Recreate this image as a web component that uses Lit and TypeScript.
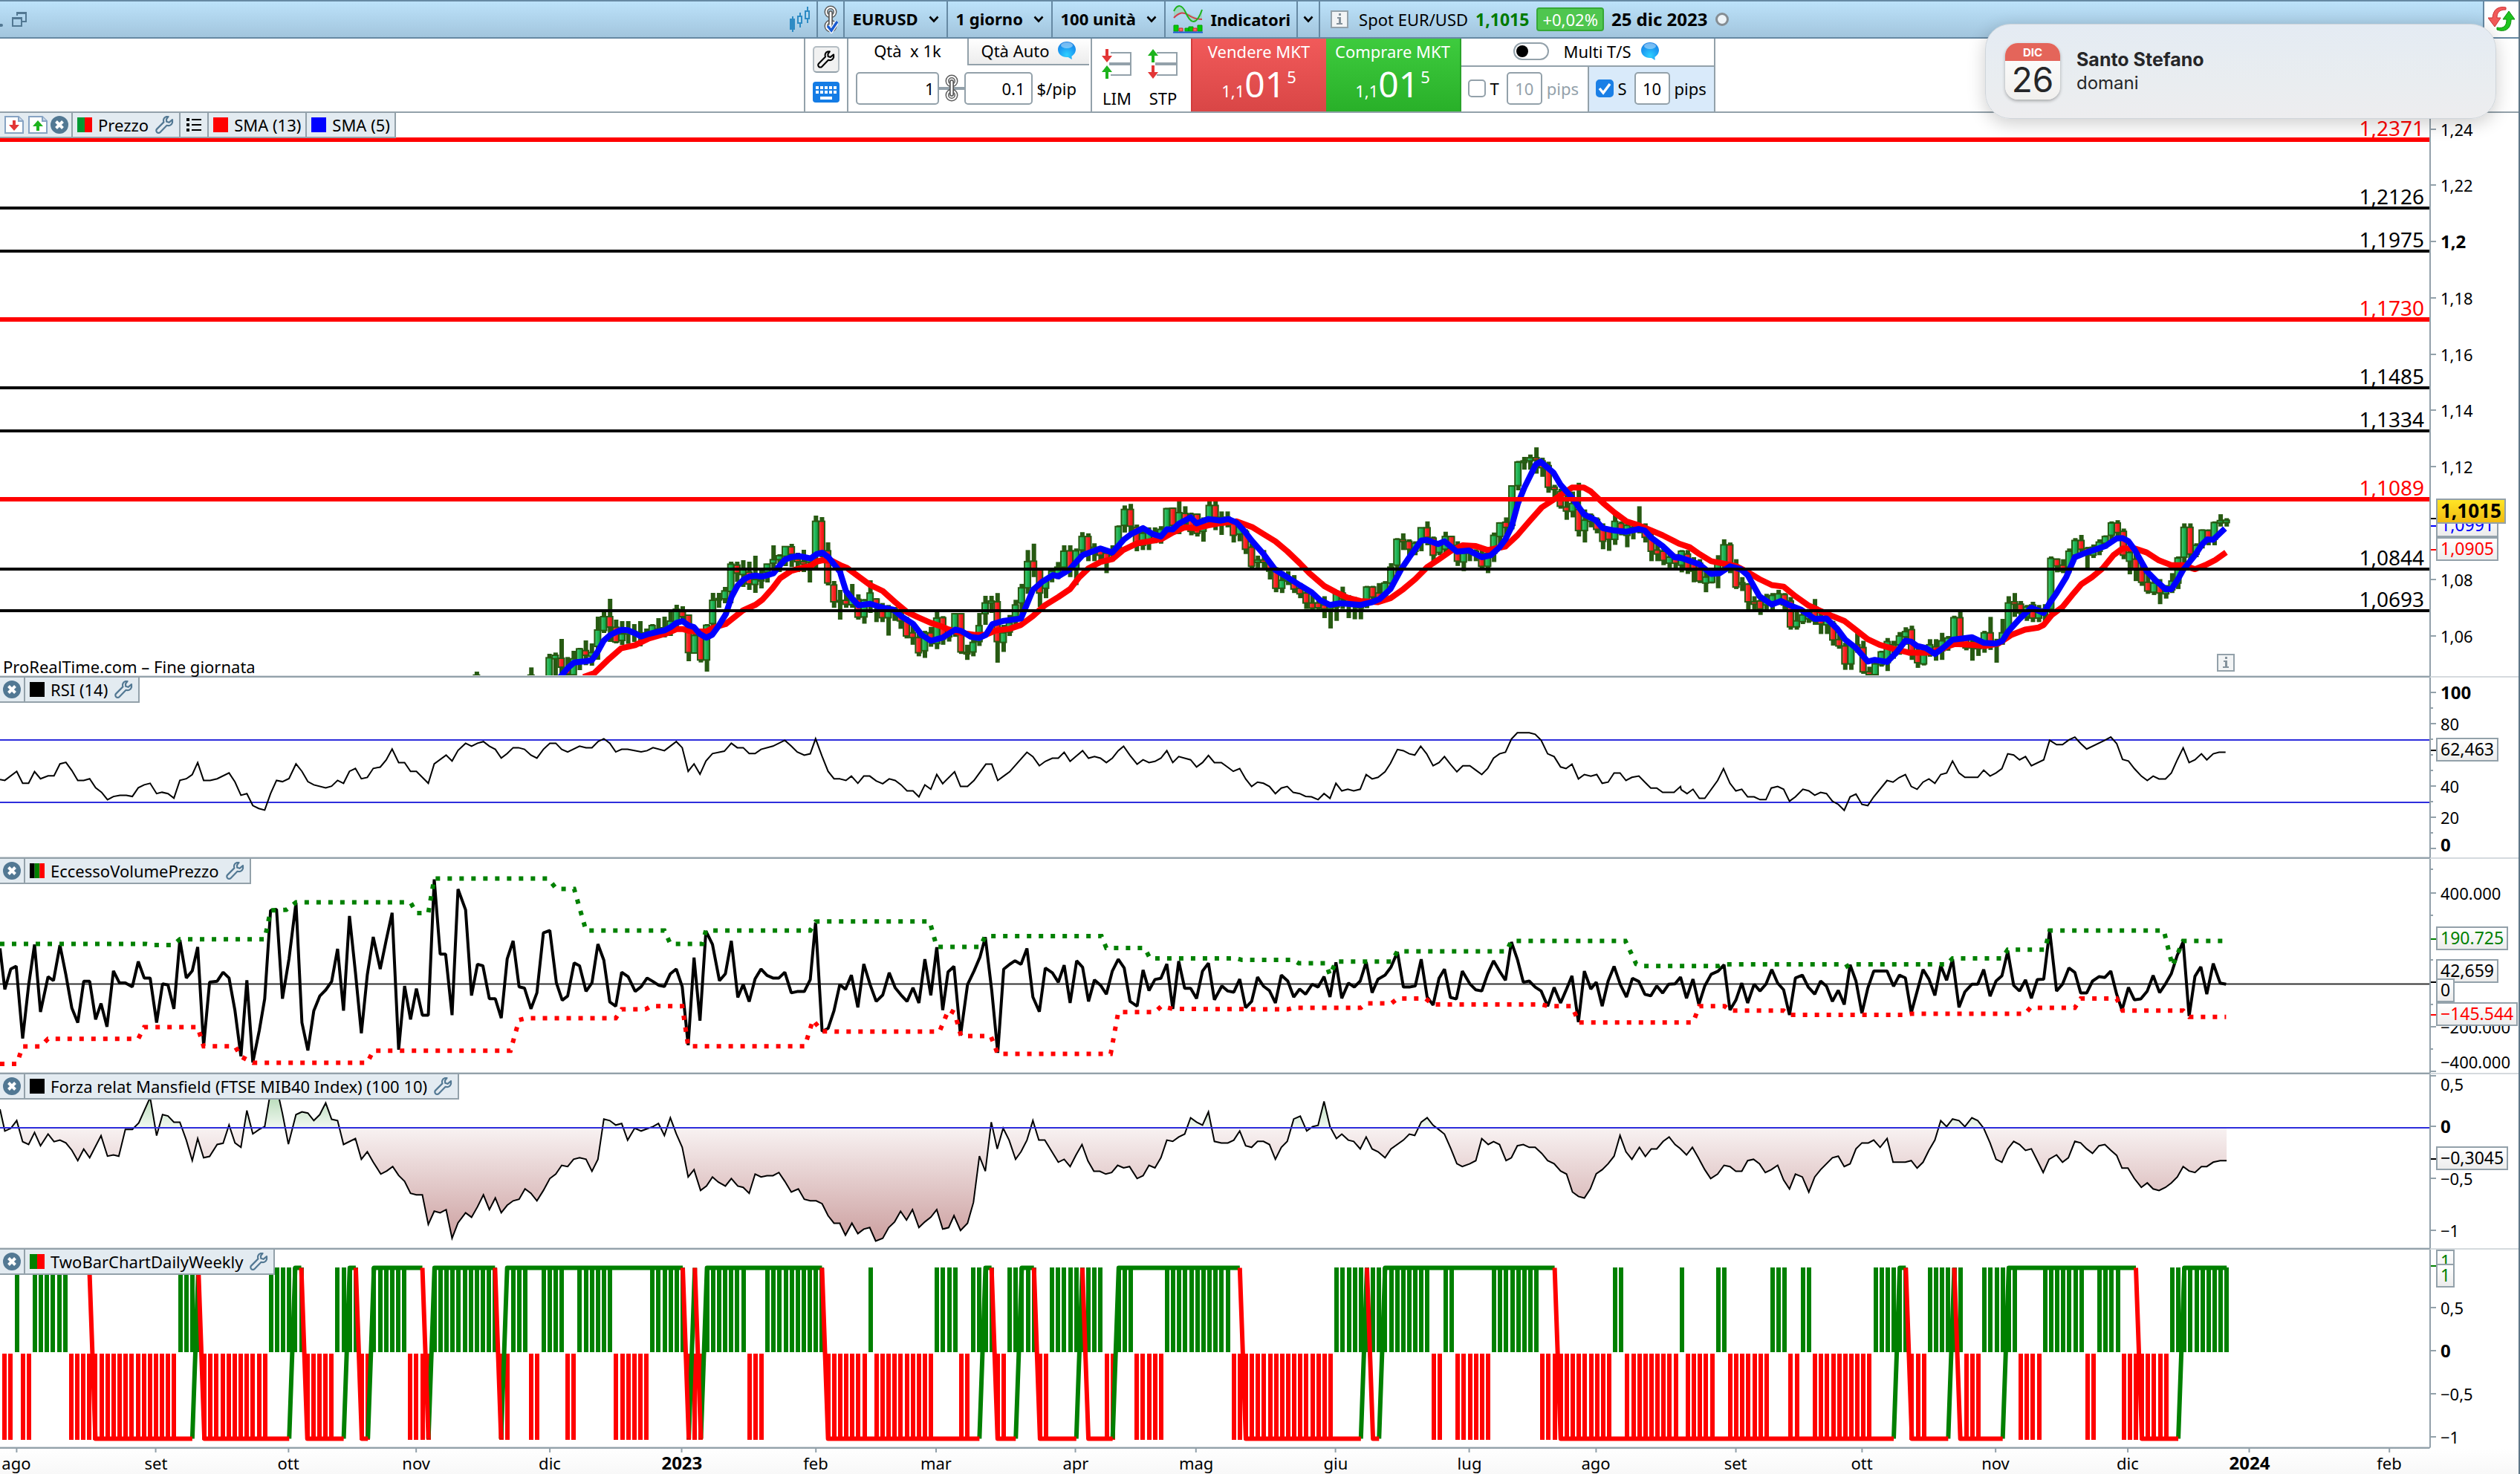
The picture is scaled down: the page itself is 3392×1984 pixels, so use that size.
import { LitElement, html, css, svg, nothing } from "lit";
import { customElement } from "lit/decorators.js";

type Pt = [number, number];
/** A digitised window of the chart: origin and units per chart pixel. */
interface Frame { x: number; y: number; sx: number; sy: number }

const SX = 1568 / 1140;
const SXR = 1568 / 1132;
const SY = 1568 / 840;
const SYL = 1568 / 548;
const EARLY: Frame = { x: 640, y: 670, sx: 3, sy: 3 };
const LEFT: Frame = { x: 0, y: 880, sx: SX, sy: 2.8 };
const MID: Frame = { x: 1130, y: 600, sx: SX, sy: SY };
const RIGHT: Frame = { x: 2260, y: 600, sx: SXR, sy: SY };
const LOW_LEFT: Frame = { x: 0, y: 1436, sx: SX, sy: SYL };
const LOW_MID: Frame = { x: 1130, y: 1436, sx: SX, sy: SYL };
const LOW_RIGHT: Frame = { x: 2260, y: 1436, sx: SXR, sy: SYL };

const trace = (...parts: [Frame, string][]): Pt[] =>
  parts.flatMap(([f, s]) =>
    s.trim().split(/\s+/).map((p): Pt => {
      const [x, y] = p.split(",").map(Number);
      return [f.x + x / f.sx, f.y + y / f.sy];
    })
  );
const join = (pts: Pt[]) => pts.map(([x, y]) => `${x.toFixed(1)},${y.toFixed(1)}`).join(" ");

/* Bars are one trading day apart, starting on 1 August 2022. */
const BAR_STEP = 8.15;
const BAR_ZERO = 22.5;
const barX = (i: number) => BAR_ZERO + BAR_STEP * i;
const barAt = (f: Frame, x: number) => Math.round((f.x + x / f.sx - BAR_ZERO) / BAR_STEP);

const SMA13 = trace(
  [EARLY, "436,724 480,708 540,650 588,608 645,595 700,568 770,548 812,530 836,530 860,537 890,540 932,540 960,525 1010,510 1080,455 1131,432 1160,410 1200,365 1230,325 1275,295 1329,280 1353,275 1377,258 1401,252 1440,255 1480,275"],
  [MID, "14,307 35,328 57,350 80,365 103,393 125,418 147,432 169,445 191,455 204,463 225,470 249,475 270,475 290,464 315,460 336,450 358,428 381,400 405,380 427,360 444,330 461,308 483,292 505,285 525,262 551,245 573,240 595,235 617,218 639,205 661,207 683,200 707,194 735,190 765,205 785,222 807,240 829,265 852,295 870,320 897,352 919,368 941,382 964,390 997,393 1020,383 1044,360 1066,335 1088,305 1110,285 1131,265 1154,250 1178,252 1200,262 1233,253 1255,225 1277,190 1300,155 1334,125 1356,105 1378,105 1391,115 1413,143 1435,168 1457,190 1480,200 1502,212 1524,225 1546,240"],
  [RIGHT, "0,246 20,255 38,272 60,290 84,296 106,302 125,315 150,335 173,350 195,354 217,378 240,400 264,415 286,428 308,440 330,463 352,486 374,500 399,510 430,520 460,520 477,518 499,505 515,498 546,500 570,503 595,497 620,475 645,462 670,457 680,450 695,425 715,405 733,375 750,348 770,330 790,308 810,275 827,258 850,258 872,268 895,288 918,300 940,300 962,310 984,298 1000,287 1020,268"]
);

const SMA5 = trace(
  [EARLY, "342,724 375,685 399,665 423,662 447,660 471,655 494,620 518,577 543,555 566,543 590,533 615,535 640,545 669,560 700,550 741,540 765,535 789,522 812,505 836,498 860,515 882,522 906,550 932,565 956,553 980,520 1011,470 1034,400 1058,355 1083,330 1106,318 1131,314 1155,318 1179,313 1203,305 1227,275 1250,250 1275,240 1305,235 1329,240 1353,245 1377,228 1401,222 1425,240 1449,270 1473,300"],
  [MID, "2,322 12,365 24,385 35,401 57,397 80,407 100,412 114,428 136,447 152,475 169,490 191,482 214,462 225,465 243,480 258,483 271,475 283,448 304,440 325,436 336,434 345,405 358,362 375,342 395,325 405,328 425,312 450,275 483,258 505,268 527,235 540,222 562,207 580,222 595,228 606,210 617,210 628,196 650,180 661,195 683,184 705,188 720,184 735,193 750,215 763,238 785,272 807,312 829,330 852,350 874,368 890,388 908,400 925,396 941,397 964,400 986,393 1000,385 1020,360 1040,310 1055,280 1077,238 1088,237 1108,247 1120,240 1143,266 1165,263 1189,280 1206,275 1222,255 1233,235 1244,205 1256,145 1268,105 1289,47 1298,40 1322,68 1335,98 1356,130 1378,172 1400,187 1413,207 1435,213 1457,216 1480,209 1491,213 1502,230 1524,252 1546,280 1557,282"],
  [RIGHT, "0,280 22,290 38,298 60,322 76,320 95,303 115,310 128,325 150,378 173,399 190,390 205,400 228,412 253,435 275,434 295,460 310,487 330,508 352,542 365,538 388,543 405,520 422,490 433,492 444,503 460,508 477,523 495,505 510,487 530,484 546,481 568,495 591,497 603,490 613,468 635,435 657,407 680,420 691,395 704,370 722,330 738,280 760,268 795,252 816,233 827,232 838,240 849,260 872,315 890,340 907,360 918,360 929,338 940,312 962,275 975,248 985,235 996,236 1018,208"]
);

/* x, high, body top, body bottom, low, direction */
const CANDLES: [Frame, string][] = [
  [EARLY, `8,702,716,720,726,g 225,685,716,720,726,g 303,630,646,726,730,g 327,625,636,650,726,g 351,570,648,684,726,r 375,643,690,712,726,r
399,618,650,715,726,g 423,606,610,655,696,g 447,576,617,636,676,r 471,588,625,640,678,g 494,480,534,600,654,g 518,462,480,536,546,g
543,408,480,522,582,r 566,492,523,582,588,r 590,498,550,576,594,g 615,498,540,550,590,g 645,510,540,550,582,r 669,498,550,560,600,r
693,528,545,560,580,g 714,510,516,545,560,g 741,486,530,545,560,g 765,480,525,540,564,g 789,462,498,530,558,g 812,432,450,500,520,g
836,438,460,480,500,r 860,472,474,625,660,r 882,520,556,627,630,g 906,550,556,655,665,r 932,510,515,655,702,g 956,384,414,508,520,g
987,384,407,413,444,g 1011,360,376,408,426,g 1034,258,268,378,426,g 1058,258,272,304,340,r 1083,252,290,310,360,g 1106,258,300,348,372,r
1131,234,330,350,384,g 1155,290,330,335,366,g 1179,266,268,300,342,g 1203,192,250,264,290,g 1227,228,234,250,300,g 1250,196,197,236,276,g
1275,186,198,228,280,r 1305,222,248,258,300,r 1329,210,258,268,300,r 1353,240,250,260,342,g 1377,72,95,230,285,g 1401,78,95,215,240,r
1425,180,214,344,354,r 1449,336,352,420,444,r 1473,372,415,421,492,g 1496,384,414,430,444,r 1520,348,405,432,444,g 1545,390,410,482,492,r`],
  [MID, `46,385,388,430,447,g 57,338,370,400,420,g 68,383,385,400,443,r 80,395,405,432,443,r 92,400,405,432,477,g 103,405,408,418,440,r
114,410,420,440,460,r 125,430,440,478,484,r 136,450,470,482,500,r 147,470,482,520,529,r 158,465,470,515,533,g 169,455,470,485,505,r
180,418,433,497,511,g 191,428,432,485,500,r 202,455,465,480,492,g 213,420,422,462,480,g 224,420,422,518,523,r 238,500,519,523,538,r
249,480,494,518,529,g 260,420,452,492,503,g 271,377,395,422,450,g 282,377,390,395,420,g 293,370,392,492,545,r 304,450,470,494,518,g
315,425,445,468,478,g 325,387,400,430,455,g 336,347,357,395,425,g 347,262,291,357,372,g 358,246,290,312,330,r 370,308,312,370,405,r
381,335,340,358,383,g 392,310,315,330,343,g 403,292,305,325,335,g 416,250,265,305,325,g 427,250,264,310,330,r 439,258,264,310,350,g
450,217,228,262,280,g 461,220,228,270,290,r 472,245,255,265,290,g 483,252,258,275,295,r 494,262,270,290,320,r 505,250,262,275,290,g
515,200,203,260,270,g 527,150,160,200,218,g 538,146,160,202,218,r 551,198,205,250,265,r 562,205,220,250,262,g 573,205,215,235,262,g
584,205,215,235,245,r 595,202,210,235,246,g 606,156,158,215,225,g 617,155,157,200,215,r 628,138,168,205,222,g 639,152,170,190,205,r
650,168,172,215,225,r 661,170,172,220,228,r 672,180,190,215,241,g 683,138,150,185,200,g 694,138,150,180,212,r 707,165,180,190,224,g
718,165,180,195,205,r 729,185,195,225,243,r 741,195,200,222,240,g 752,210,215,260,272,r 763,245,255,303,308,r 774,276,287,293,306,g
785,262,287,293,306,r 796,290,295,315,336,r 807,305,315,358,368,r 818,315,338,358,370,g 829,315,330,340,350,g 840,325,345,360,370,r
852,345,358,372,383,r 863,360,370,395,410,r 874,375,395,408,412,r 885,380,395,407,412,r 897,378,400,410,433,r 908,395,400,410,459,g
919,365,370,405,440,g 930,354,370,385,410,r 941,375,385,400,433,g 952,380,388,402,436,r 964,390,395,408,436,r 975,352,355,390,408,g
986,352,355,380,390,r 997,345,370,382,395,r 1008,340,345,375,380,g 1020,295,305,345,360,g 1033,232,235,300,330,g 1044,220,236,241,262,r
1055,235,240,260,280,r 1066,240,245,265,275,g 1077,205,206,240,265,g 1088,190,206,230,250,r 1099,228,232,275,290,r 1110,240,250,268,275,g
1120,216,228,260,275,g 1131,226,228,250,262,r 1143,240,250,290,302,r 1154,265,270,292,315,g 1167,255,262,270,290,g 1178,260,265,275,290,r
1189,262,275,303,308,r 1200,262,270,303,320,g 1211,218,225,270,292,g 1222,192,194,228,262,g 1233,180,192,205,240,r 1244,100,101,200,210,g
1255,38,41,100,112,g 1266,28,38,42,60,g 1277,22,30,38,60,g 1289,4,30,36,70,r 1300,30,38,55,78,r 1311,40,50,104,118,r
1322,98,104,110,140,r 1334,108,115,152,158,r 1345,120,154,164,186,r 1356,115,145,165,180,g 1369,93,160,213,228,r 1380,160,187,213,243,g
1391,170,175,190,205,g 1402,180,185,210,220,r 1413,195,205,240,260,r 1424,205,215,235,264,r 1434,170,190,235,249,g 1446,190,195,210,225,r
1457,190,200,225,255,g 1468,195,205,215,235,g 1480,152,205,211,220,g 1491,195,208,230,243,r 1502,220,232,265,290,r 1513,240,262,272,290,r
1524,255,265,288,300,r 1535,270,280,295,306,g 1546,272,275,295,308,r 1557,268,275,295,308,g`],
  [RIGHT, `4,262,265,300,318,g 14,262,272,310,322,r 27,280,290,315,343,r 38,285,295,340,345,r 49,310,330,345,368,g 60,310,320,343,346,g
73,275,290,320,358,g 84,235,249,300,310,g 95,243,249,305,320,r 106,285,305,355,360,r 118,330,344,348,365,g 128,345,348,392,415,r
140,378,392,398,415,r 151,375,390,410,425,r 162,372,380,400,415,g 173,370,376,400,415,g 184,362,372,395,400,g 195,370,374,400,415,r
206,380,390,455,462,r 217,418,440,455,462,g 228,420,425,442,448,g 240,410,420,435,445,g 253,385,405,440,450,r 264,410,430,448,473,r
275,425,435,450,473,g 286,440,447,488,502,r 297,470,487,503,510,r 308,495,503,548,563,r 319,495,500,548,563,g 330,470,500,510,520,r
341,490,507,568,573,r 352,555,568,575,578,r 363,540,548,575,578,g 374,515,518,550,555,g 388,483,492,545,566,g 399,490,500,510,535,g
410,468,478,500,525,g 422,456,467,480,500,g 433,452,462,525,538,r 444,505,520,545,558,r 455,520,525,548,552,g 466,486,500,520,530,g
477,486,505,515,540,r 488,470,490,515,538,g 499,478,483,500,515,g 510,427,432,485,500,g 522,417,432,485,500,r 533,480,485,508,514,r
546,478,502,508,540,r 557,490,495,510,528,g 568,465,470,500,520,g 580,430,470,500,513,r 591,485,492,500,545,r 602,435,470,490,500,g
613,378,395,470,480,g 625,370,392,398,430,r 635,390,398,420,432,r 647,400,405,430,440,g 658,392,400,433,443,r 669,400,415,433,443,g
680,398,410,425,440,g 691,278,283,410,420,g 704,283,285,302,318,r 715,285,300,315,320,r 726,258,265,305,320,g 738,232,238,275,285,g
749,224,238,260,275,r 760,254,258,270,308,r 771,248,255,275,282,g 783,235,242,265,275,g 794,225,228,245,258,g 805,190,194,225,245,g
816,187,194,218,230,r 827,208,215,275,285,r 838,255,268,290,323,g 849,270,285,312,340,r 861,295,312,343,352,r 872,320,343,365,372,r
883,335,345,368,375,g 895,335,350,370,398,r 907,350,366,372,384,g 918,320,340,362,370,g 929,278,282,345,360,g 940,195,205,280,300,g
951,195,205,272,290,r 962,245,250,272,280,g 973,210,212,245,258,g 984,210,213,240,250,r 996,190,193,235,250,g 1010,172,188,194,203,g
1020,182,187,193,203,g`],
];

const RSI = trace(
  [LEFT, "0,474 9,477 31,443 42,488 53,488 64,444 75,471 89,460 100,460 111,415 122,409 133,440 144,477 155,477 166,471 177,505 188,522 199,550 210,538 222,533 234,533 245,538 256,505 267,494 278,488 290,527 300,522 311,527 322,544 333,477 345,471 356,455 366,410 377,477 389,477 402,471 424,449 435,483 446,533 457,527 468,572 479,583 490,589 501,527 512,477 523,482 535,470 548,415 559,443 570,482 581,494 603,505 614,499 625,477 636,488 647,443 658,432 669,471 680,466 691,432 704,427 715,400 726,359 738,410 749,410 760,443 771,443 793,488 804,415 826,382 837,404 848,364 862,337 873,348 884,337 895,331 906,348 917,360 928,393 939,376 950,354 960,354 971,360 983,382 994,393 1006,360 1018,337 1029,337 1040,360 1051,370 1073,348 1085,354 1096,354 1107,331 1118,320 1129,337 1140,370 1151,360 1162,360 1187,370 1198,365 1209,354 1230,365 1252,331 1263,354 1274,443 1285,415 1296,454 1307,404 1319,376 1341,367 1354,337 1365,354 1376,354 1387,376 1398,376 1409,360 1431,348 1453,326 1465,348 1476,370 1489,382 1500,377 1510,320 1522,387 1533,443 1544,471 1555,471"],
  [MID, "1,837 12,841 22,830 34,848 45,830 56,830 68,842 80,849 92,837 103,841 114,852 125,867 136,867 147,882 158,852 169,863 180,826 191,849 213,819 224,856 237,856 249,841 271,800 282,800 293,841 304,830 315,819 347,770 358,781 370,804 381,793 394,785 405,785 416,770 427,793 450,766 461,785 472,781 483,785 494,796 505,785 516,766 526,755 538,778 551,800 562,789 573,796 584,793 595,785 606,766 617,796 628,781 650,789 661,807 672,796 683,778 694,796 707,796 718,807 729,818 741,811 752,837 763,856 774,845 785,848 796,856 807,874 818,860 829,856 840,871 852,874 863,881 874,882 886,889 897,874 908,886 919,848 930,867 941,863 952,867 964,863 975,826 986,837 997,833 1010,819 1020,798 1033,763 1044,766 1055,774 1065,777 1076,755 1087,774 1099,804 1110,796 1120,781 1131,800 1143,819 1154,804 1167,804 1178,815 1189,826 1200,811 1211,785 1222,774 1233,770 1244,737 1255,721 1277,721 1288,725 1299,740 1311,774 1323,781 1335,807 1345,811 1356,800 1368,837 1379,826 1391,830 1402,826 1412,848 1423,845 1434,822 1445,822 1456,841 1467,833 1480,830 1491,845 1502,860 1513,860 1524,871 1545,871 1557,856"],
  [RIGHT, "4,864 15,874 26,863 38,886 48,886 72,841 83,811 95,848 106,867 117,863 128,882 140,882 151,889 162,889 172,860 184,856 195,863 206,893 217,882 231,863 242,867 253,878 264,871 275,874 286,893 297,901 308,916 319,882 330,875 341,901 352,904 363,882 388,841 399,845 410,834 422,826 433,856 444,863 455,845 466,837 477,848 488,826 499,822 510,792 522,822 533,833 557,833 568,815 580,830 591,822 602,811 613,774 624,777 635,789 646,781 657,804 680,789 691,740 704,751 715,751 727,739 738,732 749,748 760,762 794,740 805,732 816,748 827,788 838,792 849,811 862,830 873,841 884,830 895,837 907,837 918,822 929,789 940,759 951,796 962,789 974,774 984,789 996,774 1007,770 1019,770"]
);

const EXCESS = trace(
  [LEFT, "0,1110 9,1265 20,1188 30,1177 42,1450 53,1250 64,1096 75,1350 89,1217 99,1232 111,1098 122,1210 133,1335 144,1390 155,1234 166,1234 177,1378 187,1318 198,1406 210,1195 221,1240 232,1240 245,1255 256,1160 267,1222 278,1222 290,1390 301,1244 311,1248 322,1338 333,1078 345,1222 356,1195 366,1105 377,1478 388,1238 402,1234 413,1200 424,1222 435,1345 446,1517 457,1230 468,1540 480,1420 490,1300 501,967 512,963 523,1300 535,1150 548,938 559,1390 570,1495 581,1345 592,1290 603,1267 614,1235 625,1112 636,1345 647,988 658,1200 669,1430 680,1210 691,1067 704,1188 715,1080 726,976 738,1492 749,1252 760,1378 771,1262 782,1362 793,1362 804,850 815,1132 825,1132 837,1362 848,887 862,965 873,1288 884,1170 894,1176 906,1300 917,1300 928,1373 939,1150 950,1082 961,1255 971,1260 983,1338 994,1278 1006,1052 1018,1043 1030,1240 1041,1306 1051,1290 1063,1165 1073,1176 1085,1272 1096,1240 1107,1094 1118,1155 1129,1312 1140,1328 1151,1200 1163,1217 1176,1272 1187,1255 1198,1222 1209,1235 1220,1250 1230,1254 1241,1206 1252,1188 1263,1255 1274,1475 1285,1145 1296,1383 1307,1045 1319,1095 1332,1232 1343,1206 1354,1082 1366,1295 1376,1246 1387,1311 1398,1225 1409,1188 1420,1212 1431,1222 1442,1222 1453,1200 1465,1278 1476,1273 1489,1273 1500,1228 1510,1013 1522,1423 1533,1412 1544,1345 1555,1245"],
  [MID, "1,1354 11,1366 22,1330 34,1411 45,1302 57,1355 68,1396 80,1380 92,1324 103,1362 114,1380 125,1396 136,1362 147,1400 158,1290 169,1381 180,1260 191,1418 201,1322 212,1308 224,1482 237,1354 249,1320 260,1285 270,1235 282,1370 293,1525 304,1315 315,1303 325,1294 336,1303 347,1263 358,1385 370,1422 381,1312 394,1324 405,1348 416,1305 427,1400 439,1294 450,1310 461,1396 472,1342 483,1355 494,1378 505,1320 516,1290 527,1312 538,1396 551,1408 562,1317 573,1369 584,1341 595,1338 606,1302 617,1415 628,1295 639,1363 650,1363 661,1389 672,1320 683,1300 694,1392 708,1357 719,1370 730,1373 741,1340 752,1412 763,1396 774,1335 785,1358 796,1369 807,1400 818,1330 830,1345 841,1385 852,1365 863,1378 875,1353 886,1360 897,1334 908,1385 919,1298 930,1388 942,1350 953,1360 964,1345 975,1297 986,1374 997,1340 1010,1330 1021,1310 1033,1272 1044,1360 1055,1360 1066,1357 1077,1290 1088,1385 1099,1405 1110,1338 1120,1315 1131,1386 1142,1390 1153,1320 1167,1352 1178,1367 1189,1370 1200,1327 1211,1294 1222,1320 1233,1343 1244,1247 1255,1290 1266,1348 1277,1345 1288,1360 1299,1370 1311,1408 1323,1361 1335,1400 1345,1368 1356,1332 1368,1448 1379,1320 1391,1365 1401,1348 1412,1408 1423,1345 1434,1308 1446,1355 1457,1385 1468,1338 1480,1346 1491,1378 1502,1382 1513,1357 1524,1375 1535,1353 1547,1352 1557,1335"],
  [RIGHT, "3,1336 14,1388 26,1340 37,1404 48,1357 60,1328 73,1320 84,1304 95,1418 106,1393 117,1350 128,1400 140,1353 151,1370 162,1353 173,1316 184,1350 195,1367 206,1430 217,1337 230,1330 241,1360 253,1378 264,1345 275,1358 286,1396 297,1368 308,1404 319,1304 330,1345 341,1426 352,1363 363,1320 388,1320 400,1358 411,1330 422,1337 433,1425 455,1316 466,1340 477,1381 488,1306 499,1343 510,1290 522,1411 533,1372 546,1353 557,1353 568,1316 580,1383 591,1345 602,1332 613,1270 624,1356 635,1370 646,1342 657,1388 668,1341 680,1340 691,1218 704,1370 715,1353 727,1312 738,1323 749,1375 760,1375 771,1345 783,1334 794,1336 805,1320 816,1378 826,1418 838,1361 849,1392 861,1390 873,1370 884,1331 896,1374 907,1352 918,1326 929,1280 940,1246 951,1433 962,1333 973,1309 984,1378 996,1301 1009,1350 1020,1353"]
);

const UPPER_BAND = trace(
  [LEFT, "0,1093 270,1093 285,1098 320,1098 333,1076 490,1076 501,967 530,965 548,937 760,937 771,977 793,977 804,847 1015,847 1030,886 1063,886 1085,1043 1230,1043 1241,1093 1300,1093 1307,1043 1500,1043 1510,1009"],
  [MID, "0,1195 167,1195 180,1259 260,1259 270,1232 485,1232 494,1262 565,1262 575,1288 735,1288 745,1292 840,1292 850,1300 900,1300 908,1330 919,1296 1022,1296 1033,1270 1235,1270 1244,1244 1455,1244 1475,1302 1485,1307"],
  [RIGHT, "0,1307 75,1307 84,1303 300,1303 310,1310 319,1303 499,1303 510,1288 602,1288 613,1266 682,1266 691,1218 904,1218 920,1307 940,1244 1020,1244"]
);
const LOWER_BAND = trace(
  [LEFT, "0,1546 31,1546 42,1480 75,1480 89,1451 256,1451 267,1407 366,1407 377,1479 435,1479 446,1518 468,1541 680,1541 691,1496 945,1496 961,1380 975,1373 1140,1373 1151,1340 1195,1340 1205,1328 1263,1328 1274,1479 1490,1479 1505,1380 1522,1423"],
  [MID, "0,1472 185,1472 202,1417 213,1425 225,1483 280,1483 293,1528 502,1528 516,1423 584,1423 596,1408 617,1415 830,1416 840,1412 965,1412 975,1401 1022,1401 1033,1389 1085,1389 1099,1404 1300,1404 1312,1408 1356,1408 1369,1449"],
  [RIGHT, "0,1449 26,1449 38,1408 85,1408 95,1419 195,1419 206,1430 420,1430 433,1427 645,1427 655,1412 738,1412 749,1389 816,1389 827,1419 940,1419 951,1435 1020,1435"]
);

const MANSFIELD = trace(
  [LOW_LEFT, "0,163 9,247 20,237 31,207 42,288 53,299 64,253 75,304 89,259 100,288 111,282 122,293 133,321 144,361 155,317 166,350 187,265 199,344 210,339 220,344 232,241 245,241 257,216 278,118 290,265 301,184 311,189 322,213 333,213 345,282 356,361 366,276 377,350 388,345 402,299 413,294 424,224 435,293 446,310 457,168 468,258 480,241 490,230 501,95 514,95 523,180 534,298 548,184 559,173 570,178 581,207 592,184 603,139 614,202 625,207 636,299 658,276 669,356 680,327 691,367 705,413 716,401 727,384 738,418 749,441 760,487 771,493 782,493 793,607 804,556 815,562 826,550 837,660 848,601 862,562 873,579 884,539 895,493 906,550 917,505 928,562 939,533 950,516 961,510 972,470 983,487 994,516 1006,476 1018,430 1029,413 1040,379 1051,384 1062,356 1073,350 1085,356 1096,402 1107,356 1118,201 1129,207 1140,224 1151,218 1162,282 1175,236 1187,247 1209,230 1219,218 1230,264 1241,196 1252,258 1263,310 1274,424 1285,396 1297,476 1308,459 1319,424 1330,444 1343,459 1354,430 1366,459 1376,464 1387,487 1398,413 1409,424 1420,419 1431,419 1442,407 1453,441 1465,482 1478,470 1489,510 1500,516 1511,516 1522,527 1533,573 1544,602 1555,602"],
  [LOW_MID, "1,605 11,648 23,602 34,642 45,625 56,619 67,671 80,660 91,619 102,597 113,556 124,590 135,550 147,619 158,597 169,579 180,550 191,625 202,619 212,573 224,630 237,602 248,522 259,344 270,402 281,213 292,316 303,236 314,282 326,356 336,327 347,282 358,207 369,282 380,282 405,367 416,356 427,384 438,339 449,299 460,362 471,402 482,402 493,413 504,407 515,379 526,389 537,384 551,430 562,419 573,379 584,389 595,350 606,282 617,287 628,270 639,259 650,196 661,213 672,224 683,173 694,287 707,293 719,293 730,282 741,247 752,304 763,310 774,287 785,287 796,299 807,356 818,310 829,287 841,201 853,190 865,247 876,230 886,225 897,133 908,230 920,276 930,259 942,282 952,287 964,316 975,270 986,316 997,327 1010,350 1021,316 1044,282 1055,259 1065,264 1077,213 1088,196 1099,225 1110,242 1120,259 1132,316 1143,373 1153,384 1167,373 1178,361 1189,276 1201,299 1211,288 1222,299 1234,361 1244,350 1255,304 1266,299 1277,310 1288,310 1300,333 1311,361 1323,373 1335,401 1346,413 1357,482 1368,499 1379,505 1390,470 1401,412 1412,396 1423,373 1434,344 1445,264 1456,327 1467,356 1481,310 1492,345 1503,316 1513,316 1525,287 1536,270 1547,299"],
  [LOW_RIGHT, "2,314 14,339 25,310 36,350 48,396 59,430 72,413 84,379 95,384 106,402 117,402 128,361 139,356 150,373 161,407 172,396 184,379 195,436 206,470 217,413 230,424 242,482 253,424 264,396 286,350 297,344 308,384 319,373 330,316 341,293 353,293 363,282 375,310 388,276 399,367 422,367 433,361 444,390 455,367 466,321 477,282 488,207 499,230 510,201 522,207 533,230 546,196 557,207 568,236 580,293 591,356 602,367 613,316 624,287 635,299 646,322 657,316 668,361 679,407 690,356 704,339 715,367 726,350 738,287 749,293 760,316 771,333 783,304 794,299 805,321 816,341 826,390 837,390 849,430 862,464 873,447 884,470 895,476 907,464 918,447 929,424 940,384 951,401 962,407 974,384 984,384 996,367 1009,361 1021,361"]
);

/* Runs of bars whose daily signal is up; every other bar is down. */
const DAILY_UP: [Frame, string][] = [
  [LOW_LEFT, "32-32 64-122 333-366 501-559 625-658 691-749 804-917 950-972 1006-1040 1073-1129 1209-1263 1307-1376 1421-1522"],
  [LOW_MID, "56-56 180-213 248-281 315-358 394-482 515-537 606-719 920-1088 1121-1132 1211-1289 1434-1445 1558-1558"],
  [LOW_RIGHT, "73-84 172-195 230-242 363-422 466-522 568-624 680-749 783-816 918-1020"],
];
/* Runs of bars whose weekly signal is up. */
const WEEKLY_UP: [Frame, string][] = [
  [LOW_LEFT, "0-166 366-366 548-559 647-658 691-782 804-917 939-1263 1285-1285 1307-1522"],
  [LOW_MID, "270-281 336-358 449-449 515-740 975-975 1010-1323"],
  [LOW_RIGHT, "411-422 510-510 613-848 940-1020"],
];
const runs = (parts: [Frame, string][]): Pt[] =>
  parts.flatMap(([f, s]) => s.split(" ").map((r): Pt => {
    const [a, b] = r.split("-").map(Number);
    return [barAt(f, a), barAt(f, b)];
  }));
const FIRST_BAR = -2;
const LAST_BAR = 365;

type Tick = [number, string, ("b" | "m")?, number?];
interface Badge { y: number; text: string; kind?: string; tick?: number }
interface Panel {
  id: string; y: number; h: number; ticks: Tick[]; minor: number[]; badges: Badge[];
}

const PRICE: Panel = {
  id: "price", y: 152, h: 758, minor: [],
  ticks: [[174, "1,24"], [249, "1,22"], [325, "1,2", "b"], [401, "1,18"], [477, "1,16"], [552, "1,14"], [628, "1,12"], [780, "1,08"], [856, "1,06"]],
  badges: [{ y: 707, text: "1,0991", kind: "blue", tick: 708 }, { y: 739, text: "1,0905", kind: "red", tick: 740 }, { y: 688, text: "1,1015", kind: "last", tick: 698 }],
};
const RSI_PANEL: Panel = {
  id: "rsi", y: 912, h: 242, minor: [953, 995, 1016, 1037, 1079, 1121],
  ticks: [[932, "100", "b"], [974, "80"], [1058, "40"], [1100, "20"], [1142, "0", "b", 1137]],
  badges: [{ y: 1009, text: "62,463", tick: 1010 }],
};
const EXCESS_PANEL: Panel = {
  id: "excess", y: 1156, h: 288, minor: [1170, 1232, 1292, 1352, 1412],
  ticks: [[1202, "400.000"], [1382, "−200.000"], [1442, "−400.000", undefined, 1429]],
  badges: [{ y: 1263, text: "190.725", kind: "green", tick: 1264 }, { y: 1307, text: "42,659", tick: 1322 }, { y: 1333, text: "0" }, { y: 1365, text: "−145.544", kind: "red", tick: 1366 }],
};
const MANS_PANEL: Panel = {
  id: "mansfield", y: 1446, h: 234, minor: [],
  ticks: [[1448, "0,5", undefined, 1459], [1516, "0", "b"], [1586, "−0,5"], [1656, "−1"]],
  badges: [{ y: 1559, text: "−0,3045", tick: 1560 }],
};
const TWO_PANEL: Panel = {
  id: "twobar", y: 1682, h: 266, minor: [],
  ticks: [[1760, "0,5"], [1818, "0", "b"], [1876, "−0,5"], [1934, "−1"]],
  badges: [{ y: 1698, text: "1", kind: "green" }, { y: 1717, text: "1", kind: "green", tick: 1704 }],
};

const LEVELS: [number, string, boolean][] = [
  [188, "1,2371", true], [280, "1,2126", false], [338, "1,1975", false], [430, "1,1730", true], [522, "1,1485", false],
  [580, "1,1334", false], [672, "1,1089", true], [766, "1,0844", false], [822, "1,0693", false],
];

const MONTHS: [number, string, boolean?][] = [
  [22, "ago"], [210, "set"], [388, "ott"], [560, "nov"], [740, "dic"], [918, "2023", true], [1098, "feb"], [1260, "mar"], [1448, "apr"],
  [1610, "mag"], [1798, "giu"], [1978, "lug"], [2148, "ago"], [2336, "set"], [2506, "ott"], [2686, "nov"], [2864, "dic"], [3028, "2024", true], [3216, "feb"],
];
const PLOT_W = 3270;

const chevron = html`<svg class="chev" viewBox="0 0 14 10" aria-hidden="true"><path d="M1.5 1.5 7 7.5l5.5-6" fill="none" stroke="#000" stroke-width="2.6" /></svg>`;
const wrenchPath = "M15.5 3.2C12.5 4.2 11.2 7.6 12.4 10.4L3.2 19.6C2 20.8 2 22.8 3.2 24S6.400 25.200 7.600 24L16.600 14.800C19.600 16 23 14.400 24 11V7.200L19.500 10.800 16.200 9.800 16 6.400 18.500 3Z";
const wrench = (cls: string, color: string) => html`<svg class=${cls} viewBox="0 0 27 28" aria-hidden="true"><path d=${wrenchPath} fill="none" stroke=${color} stroke-width="2.200" stroke-linejoin="round" /></svg>`;
const closeIcon = html`<svg class="round" viewBox="0 0 24 24" aria-hidden="true"><circle cx="12" cy="12" r="12" fill="#527893" /><path d="m7.500 7.500 9 9m0-9-9 9" stroke="#fff" stroke-width="4" /></svg>`;
const balloon = html`<svg class="balloon" viewBox="0 0 26 26" aria-hidden="true"><defs><radialGradient id="bl" cx=".5" cy=".75" r=".8"><stop offset="0" stop-color="#2fd0ff" /><stop offset=".6" stop-color="#1b9af2" /><stop offset="1" stop-color="#1c7fe0" /></radialGradient></defs><path d="M13 1c6.600 0 12 4.700 12 10.600 0 4-2.400 7.300-5.600 9.200l.4 4.200-5-3C6.800 22.800 1 18 1 11.600 1 5.700 6.400 1 13 1Z" fill="url(#bl)" /><ellipse cx="13" cy="6" rx="8" ry="4" fill="#fff" opacity=".4" /></svg>`;
const info = html`<svg class="info" viewBox="0 0 24 24" role="img" aria-label="Informazioni"><rect x="1" y="1" width="22" height="22" fill="#f2f4f5" stroke="#93a1aa" stroke-width="2" /><path d="M9 9h5v8h2v2H8v-2h3v-6H9zM11 4h3v3h-3z" fill="#84929c" /></svg>`;
const chain = (check: boolean) => html`<svg class="chain" viewBox="0 0 20 38" aria-hidden="true">
  <g fill="none"><rect x="4" y="3" width="12" height="12" rx="6" stroke="#5c5c5c" stroke-width="5" /><rect x="4" y="3" width="12" height="12" rx="6" stroke="#fff" stroke-width="2" />
  <rect x="4" y="22" width="12" height="12" rx="6" stroke="#5c5c5c" stroke-width="5" /><rect x="4" y="22" width="12" height="12" rx="6" stroke="#fff" stroke-width="2" />
  <path d="M10 10v17" stroke="#5c5c5c" stroke-width="6" stroke-linecap="round" /><path d="M10 10v17" stroke="#fff" stroke-width="2.500" stroke-linecap="round" />
  ${check ? svg`<path d="m6 28 5 6 8-12" stroke="#fff" stroke-width="6" /><path d="m6 28 5 6 8-12" stroke="#1a5bd0" stroke-width="3.500" />` : nothing}</g></svg>`;
const orderIcon = (topDown: boolean) => {
  const down = (y: number) => svg`<path d="M5 ${y}h4v9h5l-7 9-7-9h5z" fill="#e23636" />`;
  const up = (y: number) => svg`<path d="M5 ${y + 18}h4v-9h5l-7-9-7 9h5z" fill="#1db31d" />`;
  return html`<svg class="order" viewBox="0 0 42 40" aria-hidden="true">
    <path d="M12 5h27v30H12" fill="none" stroke="#93a1aa" stroke-width="2" /><path d="M10 20h29" stroke="#93a1aa" stroke-width="4" />
    ${topDown ? [down(0), up(22)] : [up(0), down(22)]}</svg>`;
};

@customElement("app-root")
export class AppRoot extends LitElement {
  static styles = css`
    :host { display: block; font: 22px/28px "Noto Sans", "Open Sans", sans-serif; color: #000; background: #fff; }
    * { box-sizing: border-box; }
    svg { display: block; flex: none; }
    button, input, select { font: inherit; color: inherit; margin: 0; }
    button { border: 0; background: none; padding: 0; }
    .app { position: relative; display: grid; grid-template-rows: 52px 100px minmax(0, 1fr); height: 100vh; border-right: 2px solid #5f7788; overflow: hidden; }

    .head { display: grid; grid-template-columns: minmax(0, 1fr) auto minmax(0, 1fr); border: solid #6689a3; border-width: 2px 0; background: linear-gradient(#bce2fa, #a2c5dd); }
    .head-left { display: flex; align-items: center; gap: 12px; }
    .dot { width: 4px; height: 4px; background: #527893; border-radius: 0 2px 2px 0; align-self: flex-end; margin-bottom: 14px; }
    .windows { width: 20px; height: 20px; }
    .head-mid { display: flex; align-items: stretch; }
    .candle-ico { width: 28px; height: 34px; align-self: center; margin-right: 8px; }
    .cell { display: flex; align-items: center; border-left: 2px solid #6689a3; font-weight: 700; }
    .link { width: 36px; justify-content: center; }
    .chain { width: 20px; height: 38px; }
    .pick { display: grid; align-items: center; }
    .pick select, .pick svg { grid-area: 1 / 1; }
    .pick select { appearance: none; border: 0; border-radius: 0; background: none; font-weight: 700; height: 100%; padding: 0 38px 2px 10px; }
    .chev { width: 14px; height: 10px; justify-self: end; margin-right: 10px; pointer-events: none; }
    .ind { gap: 10px; padding: 0 8px 0 10px; height: 100%; display: flex; align-items: center; font-weight: 700; }
    .ind-ico { width: 40px; height: 38px; }
    .more { width: 30px; display: grid; place-items: center; }
    .more .chev { justify-self: center; margin: 0; }
    .info { width: 24px; height: 24px; }
    .quote { gap: 10px; padding-left: 14px; font-weight: 400; white-space: nowrap; }
    .quote .info { margin-right: 4px; }
    .up { color: #007a00; font-weight: 700; font-size: 23px; }
    .chg { color: #fff; background: #4fc64f; border: 2px solid #36a836; border-radius: 4px; padding: 0 6px; }
    .date { font-weight: 700; font-size: 24px; }
    .ring { width: 18px; height: 18px; border: 3px solid #858d93; border-radius: 50%; background: #eef4f8; }
    .head-right { display: flex; justify-content: flex-end; }
    .refresh { width: 48px; background: #fff; border-left: 2px solid #6689a3; display: grid; place-items: center; }
    .refresh svg { width: 36px; height: 34px; }

    .trade { display: flex; justify-content: center; border-bottom: 2px solid #93a1aa; }
    .group { border-left: 2px solid #93a1aa; }
    .tools { width: 58px; display: flex; flex-direction: column; align-items: center; justify-content: space-between; padding: 10px 0 12px; }
    .wrench-btn { width: 36px; height: 36px; border: 2px solid #b4bdc3; border-bottom-color: #93a1aa; border-radius: 5px; background: #f1f1f1; display: grid; place-items: center; }
    .wrench-big { width: 26px; height: 28px; }
    .kbd { width: 36px; height: 28px; }
    .qty { width: 328px; display: grid; grid-template-rows: 36px 1fr; }
    .tabs { display: grid; grid-template-columns: 160px 164px; }
    .tabs button { display: flex; align-items: center; justify-content: center; gap: 10px; white-space: pre; padding-bottom: 4px; }
    .tabs .auto { border: solid #93a1aa; border-width: 0 0 2px 2px; padding-bottom: 2px; background: linear-gradient(#fff, #ececec); }
    .balloon { width: 26px; height: 26px; }
    .amounts { display: flex; align-items: center; padding: 0 0 0 10px; }
    .amounts input, .ts input[type="text"] { height: 44px; border: 2px solid #93a1aa; border-radius: 5px; background: #fff; text-align: right; padding: 0 4px; }
    .lots { width: 112px; }
    .pipv { width: 92px; padding-right: 8px !important; }
    .tie { width: 34px; display: grid; place-items: center; background: linear-gradient(#93a1aa, #93a1aa) center / 100% 4px no-repeat; }
    .amounts label { margin-left: 6px; }
    .orders { width: 135px; display: flex; gap: 20px; padding: 14px 0 0 13px; }
    .orders button { display: flex; flex-direction: column; align-items: center; gap: 12px; width: 42px; }
    .order { width: 42px; height: 40px; }
    .mkt { width: 182px; color: #fff; display: flex; flex-direction: column; align-items: center; justify-content: flex-start; gap: 6px; padding-top: 3px; }
    .sell { background: linear-gradient(#f15a5a, #d94646); border-left: 2px solid #d23c3c; }
    .buy { background: linear-gradient(#3ecb3e, #29b029); border-right: 2px solid #29a329; }
    .px { display: flex; align-items: baseline; line-height: 48px; }
    .px b { font-weight: 400; font-size: 48px; }
    .px i { font-style: normal; align-self: flex-start; line-height: 28px; margin-left: 2px; }
    .ts { width: 342px; border-right: 2px solid #93a1aa; display: grid; grid-template-rows: 38px 1fr; }
    .multi { display: flex; align-items: center; padding: 0 0 2px 70px; border-bottom: 2px solid #93a1aa; }
    .toggle { width: 48px; height: 24px; border: 2px solid #93a1aa; border-radius: 12px; background: #fff; padding: 2px; display: flex; }
    .toggle::before { content: ""; width: 16px; height: 16px; border-radius: 50%; background: #000; }
    .multi span { margin: 0 12px 0 20px; }
    .stops { display: grid; grid-template-columns: 1fr 1fr; padding-bottom: 0; }
    .stop { display: flex; align-items: center; gap: 6px; padding: 0 0 2px 9px; }
    .stop + .stop { background: #d9eafa; border-left: 2px solid #93a1aa; }
    .off { color: #93a1aa; }
    .ts input[type="checkbox"] { appearance: none; width: 24px; height: 24px; border: 2px solid #93a1aa; border-radius: 5px; background: #fff; flex: none; }
    .ts input[type="checkbox"]:checked { border-color: #1a7fe6; background: #1a7fe6; }
    .tick { position: relative; display: grid; }
    .tick svg { position: absolute; inset: 3px; width: 18px; height: 18px; pointer-events: none; }
    .ts input[type="text"] { width: 48px; text-align: center; padding: 0; margin-left: 4px; }

    .charts { display: grid; min-height: 0; grid-template-rows: minmax(0, 760fr) minmax(0, 244fr) minmax(0, 290fr) minmax(0, 236fr) minmax(0, 268fr) 34px; }
    .panel { display: grid; grid-template-columns: minmax(0, 1fr) 120px; min-height: 0; }
    .plot { position: relative; border-bottom: 2px solid #93a1aa; min-height: 0; min-width: 0; }
    .plot > svg { width: 100%; height: 100%; }
    .axis { position: relative; border-left: 2px solid #93a1aa; border-bottom: 2px solid #d5dade; overflow: hidden; min-height: 0; }
    .panel.twobar .axis { border-bottom-color: #fff; }
    .axis > svg { width: 100%; height: 100%; }
    .lab { position: absolute; left: 13px; transform: translateY(-50%); white-space: nowrap; line-height: 24px; }
    .lab.b { font-weight: 700; font-size: 24px; }
    .badge { position: absolute; left: 7px; height: 32px; font-size: 23px; line-height: 26px; transform: translateY(-50%); border: 2px solid #93a1aa; background: linear-gradient(#fff, #ececec); padding: 0 4px; white-space: nowrap; }
    .badge.blue { color: #00f; }
    .badge.red { color: #f00; }
    .badge.green { color: #008000; }
    .badge.last { height: 34px; line-height: 29px; font-size: 26px; font-weight: 700; background: linear-gradient(#ffe526, #f0ba12); }
    .level { position: absolute; right: 7px; font-size: 28px; line-height: 28px; margin-top: -30px; }
    .level.red { color: #f00; }
    .source { position: absolute; left: 4px; bottom: 0; line-height: 26px; }
    .plot-info { position: absolute; bottom: 6px; right: 262px; padding: 0; }

    .legend { position: absolute; left: 0; top: 0; display: flex; height: 34px; background: #e3ebf1; border: solid #93a1aa; border-width: 0 2px 2px 0; white-space: nowrap; }
    .legend button { display: flex; align-items: center; }
    .legend .item { gap: 8px; padding: 0 6px; border-left: 2px solid #93a1aa; line-height: 32px; }
    .legend .shut { padding: 0 4px; }
    .legend .page { padding: 0 0 0 6px; }
    .round { width: 24px; height: 24px; }
    .page svg { width: 26px; height: 24px; }
    .swatch { width: 20px; height: 20px; }
    .wrench-sm { width: 27px; height: 28px; }
    .list { width: 20px; height: 18px; margin: 0 2px; }

    .time { position: relative; background: linear-gradient(#fff, #f8f8f8); overflow: hidden; }
    .months { position: relative; height: 100%; margin-right: 120px; }
    .month { position: absolute; top: 0; transform: translateX(-50%); padding-top: 5px; line-height: 28px; }
    .month::before { content: ""; position: absolute; left: 50%; top: 0; width: 2px; height: 5px; margin-left: -1px; background: #93a1aa; }
    .month.b { font-weight: 700; font-size: 24px; }

    .note { position: absolute; top: 32px; right: 30px; width: 688px; height: 128px; border-radius: 34px; background: linear-gradient(#e4ebf3, #e9edf0 60%, #ededef); border: 1px solid #cfd5da; box-shadow: 0 6px 24px rgba(0, 0, 0, .2); display: flex; align-items: center; gap: 22px; padding: 0 26px; font-family: Inter, "Liberation Sans", sans-serif; color: #262628; }
    .cal { width: 74px; height: 76px; border-radius: 17px; overflow: hidden; background: linear-gradient(#fff, #f1f0ee); box-shadow: 0 2px 4px rgba(0, 0, 0, .3); text-align: center; display: grid; grid-template-rows: 24px 1fr; }
    .cal span { background: #e4655a; color: #fff; font: 700 15px/26px Inter, sans-serif; }
    .cal b { font: 400 46px/50px Inter, sans-serif; }
    .msg { font-size: 24px; line-height: 32px; margin: 0; }
    .msg strong { display: block; font-weight: 700; font-size: 25px; }
  `;

  private axis(p: Panel) {
    const at = (y: number) => `top:${(((y - p.y) / p.h) * 100).toFixed(2)}%`;
    const colors: Record<string, string> = { blue: "#00f", red: "#f00", green: "#008000" };
    return html`<div class="axis">
      <svg viewBox="0 ${p.y} 118 ${p.h}" preserveAspectRatio="none" aria-hidden="true">
        ${p.ticks.map(([y]) => svg`<path d="M0 ${y}h7" stroke="#93a1aa" stroke-width="2" />`)}
        ${p.minor.map((y) => svg`<path d="M0 ${y}h3" stroke="#93a1aa" stroke-width="2" />`)}
        ${p.badges.map((b) => b.tick ? svg`<path d="M0 ${b.tick}h7" stroke=${colors[b.kind ?? ""] ?? "#000"} stroke-width="2" />` : nothing)}
      </svg>
      ${p.ticks.map(([y, t, k, ly]) => html`<span class="lab ${k ?? ""}" style=${at(ly ?? y)}>${t}</span>`)}
      ${p.badges.map((b) => html`<span class="badge ${b.kind ?? ""}" style=${at(b.y)}>${b.text}</span>`)}
    </div>`;
  }

  private panel(p: Panel, drawing: unknown, overlay: unknown) {
    return html`<section class="panel ${p.id}">
      <div class="plot">
        <svg viewBox="0 ${p.y} ${PLOT_W} ${p.h}" preserveAspectRatio="none" role="img" aria-label=${p.id}>${drawing}
          <path d="M0 ${p.y + p.h - 0.5}H${PLOT_W}" stroke="#d5dade" /></svg>
        ${overlay}
      </div>
      ${this.axis(p)}
    </section>`;
  }

  private legend(colors: string[], name: string) {
    return html`<div class="legend"><button class="shut" aria-label="Chiudi">${closeIcon}</button>${this.item(colors, name, true)}</div>`;
  }

  private item(colors: string[], name: string, tool: boolean) {
    const w = 20 / colors.length;
    return html`<button class="item"><svg class="swatch" viewBox="0 0 20 20" aria-hidden="true">${colors.map((c, i) => svg`<rect x=${i * w} width=${w} height="20" fill=${c} />`)}</svg>${name}${tool ? wrench("wrench-sm", "#527893") : nothing}</button>`;
  }

  private candles() {
    return CANDLES.flatMap(([f, s]) => s.trim().split(/\s+/).map((c) => {
      const [x0, h, t, b, l, k] = c.split(",");
      const x = barX(barAt(f, Number(x0)));
      const y = (v: string) => f.y + Number(v) / f.sy;
      const bh = Math.max(y(b) - y(t), 2);
      return svg`<rect x=${x - 3} y=${y(h)} width="6" height=${y(l) - y(h)} fill="#275a12" />
        <rect x=${x - 4.5} y=${y(t)} width="8" height=${bh} fill=${k === "g" ? "url(#cg)" : "url(#cr)"} stroke="#275a12" stroke-width="2" />`;
    }));
  }

  private priceDrawing() {
    return svg`<defs>
        <linearGradient id="cg"><stop offset="0" stop-color="#4bd07b" /><stop offset=".5" stop-color="#1fb455" /><stop offset="1" stop-color="#119a40" /></linearGradient>
        <linearGradient id="cr"><stop offset="0" stop-color="#ff5050" /><stop offset=".5" stop-color="#fb2020" /><stop offset="1" stop-color="#e81414" /></linearGradient>
      </defs>
      ${this.candles()}
      <polyline points=${join(SMA13)} fill="none" stroke="#f00" stroke-width="8" stroke-linejoin="round" />
      <polyline points=${join(SMA5)} fill="none" stroke="#00f" stroke-width="8" stroke-linejoin="round" />
      ${LEVELS.map(([y, , red]) => svg`<path d="M0 ${y}H${PLOT_W}" stroke=${red ? "#f00" : "#000"} stroke-width=${red ? 6 : 4} />`)}`;
  }

  private twoBarDrawing() {
    const up = new Set<number>();
    for (const [a, b] of runs(DAILY_UP)) for (let i = a; i <= b; i++) up.add(i);
    const bars = [];
    for (let i = FIRST_BAR; i <= LAST_BAR; i++) {
      const on = up.has(i);
      bars.push(svg`<rect x=${Math.round(barX(i)) - 3} y=${on ? 1706 : 1822} width="6" height=${on ? 114 : 116} fill=${on ? "#008000" : "#f00"} />`);
    }
    const top = 1706.5;
    const low = 1936.5;
    const weekly = runs(WEEKLY_UP);
    let green = "";
    let red = "";
    weekly.forEach(([a, b], n) => {
      const start = n === 0 ? `M0 ${top}` : `M${barX(a - 1)} ${low}L${barX(a)} ${top}`;
      green += `${start}H${barX(b)}`;
      const next = weekly[n + 1];
      if (next) red += `M${barX(b)} ${top}L${barX(b + 1)} ${low}H${barX(next[0] - 1)}`;
    });
    return svg`${bars}<path d=${green} fill="none" stroke="#008000" stroke-width="6" stroke-linejoin="round" />
      <path d=${red} fill="none" stroke="#f00" stroke-width="6" stroke-linejoin="round" />`;
  }

  render() {
    const pct = (v: number, p: Panel) => `top:${(((v - p.y) / p.h) * 100).toFixed(2)}%`;
    const zero = 1518;
    const area = `0,${zero} ${join(MANSFIELD)} ${MANSFIELD[MANSFIELD.length - 1][0].toFixed(1)},${zero}`;
    const picker = (label: string, value: string) => html`<div class="cell pick"><select aria-label=${label}><option>${value}</option></select>${chevron}</div>`;
    const page = (color: string, d: string, label: string) => html`<button class="page" aria-label=${label}><svg viewBox="0 0 26 24" aria-hidden="true"><path d="M1 1h18l6 6v16H1z" fill="#fff" stroke="#86a3c3" stroke-width="2" /><path d="M19 1v6h6" fill="#c9d8e8" stroke="#86a3c3" stroke-width="2" /><path d=${d} fill=${color} /></svg></button>`;

    return html`<div class="app">
      <header class="head">
        <div class="head-left"><span class="dot"></span>
          <svg class="windows" viewBox="0 0 20 20" aria-hidden="true"><path d="M7 5V1h12v12h-5M1 8h12v11H1zM7 2h12M1 9h12" fill="none" stroke="#527893" stroke-width="2" /></svg>
        </div>
        <div class="head-mid">
          <svg class="candle-ico" viewBox="0 0 28 34" aria-hidden="true"><g stroke="#2e8bc4" stroke-width="2"><path d="M4 13v21M14 8v20M24 0v22" /><rect x="1" y="17" width="5" height="13" fill="#2e8bc4" /><rect x="11" y="13" width="5" height="9" fill="#b4d9f0" /><rect x="21" y="6" width="5" height="10" fill="#b4d9f0" /></g></svg>
          <button class="cell link" aria-label="Collega">${chain(true)}</button>
          ${picker("Strumento", "EURUSD")}${picker("Periodo", "1 giorno")}${picker("Unità", "100 unità")}
          <div class="cell"><button class="ind"><svg class="ind-ico" viewBox="0 0 40 38" aria-hidden="true">
            <path d="M1 8C6-2 12-1 17 9s12 22 22-3V19C32 18 22 10 14 10S6 13 1 17z" fill="#8fd0a4" opacity=".6" /><path d="M1 17C9 9 14 9 20 13s12 6 19 6" fill="none" stroke="#d43a4a" stroke-width="2" /><path d="M1 8C6-2 12-1 17 10s13 22 22-4" fill="none" stroke="#1db31d" stroke-width="2" />
            <path d="M1 27h6v8H1zM16 31h5v4h-5zM21 29h6v6h-6zM33 27h6v8h-6z" fill="#0c0" stroke="#009a00" /><path d="M8 31h5v4H8zM27 31h5v4h-5z" fill="#ff6a6a" stroke="#c22" /><path d="M0 36.500h40" stroke="#1a5bd0" stroke-width="2" /></svg>Indicatori</button></div>
          <button class="cell more" aria-label="Altri indicatori">${chevron}</button>
          <div class="cell quote">${info}<span>Spot EUR/USD</span><span class="up">1,1015</span><span class="chg">+0,02%</span><span class="date">25 dic 2023</span><span class="ring"></span></div>
        </div>
        <div class="head-right"><button class="refresh" aria-label="Inverti"><svg viewBox="0 0 36 34" aria-hidden="true"><path d="M24 1C13-1 7 4 6 15H0l9 12 8-12h-5C12 8 15 4 24 4z" fill="#f25a5a" stroke="#c33" /><path d="M12 31c11 4 19-1 19-14h5L28 6l-8 11h5c0 8-3 13-13 11z" fill="#1fc41f" stroke="#0a8f0a" /></svg></button></div>
      </header>

      <div class="trade">
        <div class="group tools"><button class="wrench-btn" aria-label="Impostazioni">${wrench("wrench-big", "#000")}</button>
          <button aria-label="Tastiera"><svg class="kbd" viewBox="0 0 36 28" aria-hidden="true"><rect width="36" height="28" rx="4" fill="#147ce5" /><path d="M4 8h28M4 14h28" stroke="#fff" stroke-width="4" stroke-dasharray="4 2" /><path d="M10 22h16" stroke="#fff" stroke-width="4" /></svg></button></div>
        <div class="group qty">
          <div class="tabs"><button>Qtà  x 1k</button><button class="auto">Qtà Auto${balloon}</button></div>
          <div class="amounts"><input class="lots" type="text" aria-label="Quantità" .value=${"1"} /><span class="tie">${chain(false)}</span><input id="pipv" class="pipv" type="text" .value=${"0.1"} /><label for="pipv">$/pip</label></div>
        </div>
        <div class="group orders"><button>${orderIcon(true)}LIM</button><button>${orderIcon(false)}STP</button></div>
        <button class="mkt sell">Vendere MKT<span class="px">1,1<b>01</b><i>5</i></span></button>
        <button class="mkt buy">Comprare MKT<span class="px">1,1<b>01</b><i>5</i></span></button>
        <div class="ts">
          <div class="multi"><button class="toggle" role="switch" aria-checked="false" aria-label="Multi T/S"></button><span>Multi T/S</span>${balloon}</div>
          <div class="stops">
            <div class="stop"><input id="t" type="checkbox" /><label for="t">T</label><input id="tp" class="off" type="text" aria-label="Target" .value=${"10"} /><label class="off" for="tp">pips</label></div>
            <div class="stop"><span class="tick"><input id="s" type="checkbox" checked /><svg viewBox="0 0 18 18" aria-hidden="true"><path d="m2 9 5 6 9-12" fill="none" stroke="#fff" stroke-width="3.500" /></svg></span><label for="s">S</label><input id="sp" type="text" aria-label="Stop" .value=${"10"} /><label for="sp">pips</label></div>
          </div>
        </div>
      </div>

      <main class="charts">
        ${this.panel(PRICE, this.priceDrawing(), html`
          ${LEVELS.map(([y, t, red]) => html`<span class="level ${red ? "red" : ""}" style=${pct(y, PRICE)}>${t}</span>`)}
          <div class="legend">${page("#e23636", "M11 6h4v6h5l-7 8-7-8h5z", "Sposta giù")}${page("#1db31d", "M11 20h4v-6h5l-7-8-7 8h5z", "Sposta su")}<button class="shut" aria-label="Chiudi">${closeIcon}</button>${this.item(["#009933", "#f00"], "Prezzo", true)}
            <button class="item" aria-label="Elenco"><svg class="list" viewBox="0 0 20 18" aria-hidden="true"><path d="M0 2h4M0 9h4M0 16h4" stroke="#000" stroke-width="4" /><path d="M7 2h13M7 9h13M7 16h13" stroke="#000" stroke-width="2" /></svg></button>
            ${this.item(["#f00"], "SMA (13)", false)}${this.item(["#00f"], "SMA (5)", false)}</div>
          <span class="source">ProRealTime.com – Fine giornata</span>
          <button class="plot-info">${info}</button>`)}
        ${this.panel(RSI_PANEL, svg`<path d="M0 996H${PLOT_W}M0 1080H${PLOT_W}" stroke="#2d2ddc" stroke-width="2" />
          <polyline points=${join(RSI)} fill="none" stroke="#000" stroke-width="2" />`, this.legend(["#000"], "RSI (14)"))}
        ${this.panel(EXCESS_PANEL, svg`<path d="M0 1324.500H${PLOT_W}" stroke="#333" stroke-width="2" />
          <polyline points=${join(EXCESS)} fill="none" stroke="#000" stroke-width="4" stroke-linejoin="bevel" />
          <polyline points=${join(UPPER_BAND)} fill="none" stroke="#008000" stroke-width="6" stroke-dasharray="6 10" />
          <polyline points=${join(LOWER_BAND)} fill="none" stroke="#f00" stroke-width="6" stroke-dasharray="6 10" />`, this.legend(["#000", "#008000", "#f00"], "EccessoVolumePrezzo"))}
        ${this.panel(MANS_PANEL, svg`<defs><linearGradient id="mg" gradientUnits="userSpaceOnUse" x1="0" x2="0" y1="1446" y2="1680"><stop offset="0" stop-color="#8fc791" /><stop offset=".307" stop-color="#f1f8f1" /><stop offset=".308" stop-color="#f8f2f2" /><stop offset="1" stop-color="#c99a9a" /></linearGradient></defs>
          <polygon points=${area} fill="url(#mg)" /><polyline points=${join(MANSFIELD)} fill="none" stroke="#000" stroke-width="2" />
          <path d="M0 ${zero}H${PLOT_W}" stroke="#2d2ddc" stroke-width="2" />`, this.legend(["#000"], "Forza relat Mansfield (FTSE MIB40 Index) (100 10)"))}
        ${this.panel(TWO_PANEL, this.twoBarDrawing(), this.legend(["#008000", "#f00"], "TwoBarChartDailyWeekly"))}
        <div class="time"><div class="months">${MONTHS.map(([x, t, b]) => html`<span class="month ${b ? "b" : ""}" style=${`left:${((x / PLOT_W) * 100).toFixed(2)}%`}>${t}</span>`)}</div></div>
      </main>

      <aside class="note"><div class="cal"><span>DIC</span><b>26</b></div><p class="msg"><strong>Santo Stefano</strong>domani</p></aside>
    </div>`;
  }
}
